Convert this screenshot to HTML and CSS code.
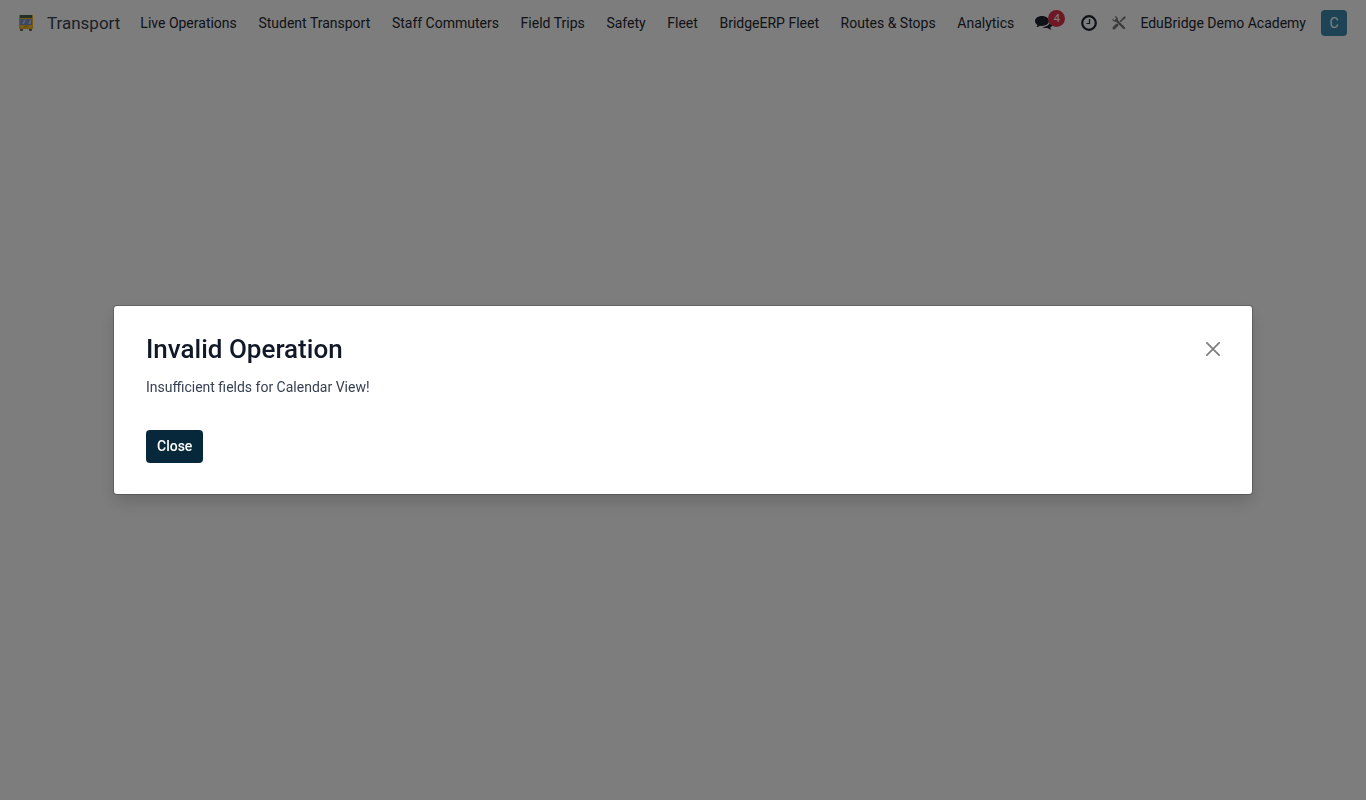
FILE: index.html
```html
<!DOCTYPE html>
<html lang="en">
<head>
<meta charset="utf-8">
<meta name="viewport" content="width=device-width, initial-scale=1">
<title>Transport</title>
<link rel="stylesheet" href="styles.css">
</head>
<body>
<header class="navbar">
  <a class="app-icon" href="#" aria-label="Home menu">
    <svg width="16" height="18" viewBox="0 0 16 18" aria-hidden="true">
      <rect x="2" y="14" width="3" height="3" rx="1" fill="#66604a"/>
      <rect x="11" y="14" width="3" height="3" rx="1" fill="#66604a"/>
      <rect x="1" y="1" width="14" height="14" rx="1" fill="#e8b020"/>
      <rect x="2" y="1" width="12" height="3" fill="#44604c"/>
      <rect x="2" y="5" width="12" height="6" fill="#7c8fc4"/>
      <path d="M4 10l2-4h2l-2 4zM10 10l2-4h1v3l-1 1z" fill="#b4c2e6"/>
      <path d="M3 12h2v1H3zM11 12h2v1h-2z" fill="#f5d878"/>
      <path d="M6 12h4v1H6z" fill="#c9951a"/>
    </svg>
  </a>
  <a class="brand" href="#">Transport</a>
  <nav class="menu">
    <a href="#">Live Operations</a>
    <a href="#">Student Transport</a>
    <a href="#">Staff Commuters</a>
    <a href="#">Field Trips</a>
    <a href="#">Safety</a>
    <a href="#">Fleet</a>
    <a href="#">BridgeERP Fleet</a>
    <a href="#">Routes &amp; Stops</a>
    <a href="#">Analytics</a>
  </nav>
  <div class="systray">
    <button class="tray-button messages" type="button" aria-label="Messages">
      <svg width="18" height="16" viewBox="0 0 18 16" fill="currentColor" aria-hidden="true">
        <path d="M7 1C3 1 0 3.200 0 6c0 1.600 1 3 2.600 3.900-.3.900-.9 1.600-1.500 2.200 1.600-.1 2.900-.7 3.900-1.400.6.200 1.300.2 2 .2 3.900 0 7-2.200 7-4.900S10.900 1 7 1z"/>
        <path d="M15.300 5.300c.3 3.700-3.400 6.600-8 6.700 1.200.9 3.100 1.300 5 1 1.100.9 2.500 1.500 4.400 1.700-.7-.7-1.200-1.300-1.500-2.200C18.600 10.800 18.800 7.100 15.300 5.300z"/>
      </svg>
      <span class="badge">4</span>
    </button>
    <button class="tray-button" type="button" aria-label="Activities">
      <svg width="16" height="16" viewBox="0 0 16 16" fill="none" stroke="currentColor" aria-hidden="true">
        <circle cx="8" cy="8" r="6.800" stroke-width="2.200"/>
        <path d="M8.500 4v4.500H5.500" stroke-width="1.200"/>
      </svg>
    </button>
    <button class="tray-button tools" type="button" aria-label="Developer tools">
      <svg width="14" height="14" viewBox="0 0 14 14" fill="none" stroke="currentColor" aria-hidden="true">
        <path d="M4 4l8 8" stroke-width="2.400" stroke-linecap="round"/>
        <path d="M.3 2.500l2 1.700 1.700-.3.200-1.700L2.600.4C5 .1 6.500 2 5.800 4.300L4.500 5.700C2.500 6.200.1 5 .3 2.500z" fill="currentColor" stroke="none"/>
        <path d="M12.600 1.400L8.200 5.800" stroke-width="1.600"/>
        <path d="M13 .3l.8.800-1.600 2.400-1.700-1.700z" fill="currentColor" stroke="none"/>
        <path d="M5 9l-3 3" stroke-width="3" stroke-linecap="round"/>
      </svg>
    </button>
    <span class="company">EduBridge Demo Academy</span>
    <button class="avatar" type="button" aria-label="User menu">C</button>
  </div>
</header>
<div class="backdrop">
  <section class="dialog" role="dialog" aria-modal="true" aria-labelledby="dialog-title">
    <div class="dialog-header">
      <h1 id="dialog-title">Invalid Operation</h1>
      <button class="dismiss" type="button" aria-label="Dismiss">
        <svg width="14" height="14" viewBox="0 0 14 14" fill="none" stroke="currentColor" stroke-width="1.800" stroke-linecap="round" aria-hidden="true">
          <path d="M.9.9l12.200 12.200M13.100.9L.9 13.100"/>
        </svg>
      </button>
    </div>
    <p>Insufficient fields for Calendar View!</p>
    <button class="primary" type="button">Close</button>
  </section>
</div>
</body>
</html>
```
FILE: styles.css
```css
* {
  box-sizing: border-box;
}

body {
  margin: 0;
  min-height: 100vh;
  background: #fafafa;
  color: #374151;
  font-family: Roboto, "Noto Sans", sans-serif;
  font-size: 14px;
  line-height: 21px;
}

a {
  color: inherit;
  text-decoration: none;
}

button {
  font: inherit;
  border: 0;
  padding: 0;
  cursor: pointer;
}

svg {
  display: block;
}

.navbar {
  display: flex;
  align-items: center;
  height: 46px;
  padding: 0 19px 0 18px;
  color: #22262e;
  white-space: nowrap;
}

.brand {
  margin-left: 13px;
  font-size: 17px;
  color: #374151;
}

.menu {
  display: flex;
  flex: 1;
  justify-content: space-between;
  max-width: 874px;
  margin-left: 20px;
}

.systray {
  display: flex;
  align-items: center;
  margin-left: auto;
  padding-left: 21px;
}

.tray-button {
  margin-right: 15px;
  background: none;
  color: #1c2430;
}

.messages {
  position: relative;
  margin-right: 28px;
}

.badge {
  position: absolute;
  top: -5px;
  left: 13px;
  width: 17px;
  height: 17px;
  border-radius: 50%;
  background: #d9304a;
  color: #fff;
  font-size: 11px;
  line-height: 17px;
  text-align: center;
}

.tools {
  margin-right: 14px;
  color: #777;
}

.avatar {
  width: 26px;
  height: 26px;
  margin-left: 15px;
  border-radius: 4px;
  background: #3c87ab;
  color: #fff;
}

.backdrop {
  position: fixed;
  inset: 0;
  display: flex;
  align-items: center;
  justify-content: center;
  padding: 0 114px;
  background: rgba(0, 0, 0, 0.5);
}

.dialog {
  width: 100%;
  max-width: 1138px;
  padding: 24px 32px 31px;
  border-radius: 3px;
  background: #fff;
  box-shadow: 0 0 0 1px rgba(0, 0, 0, 0.2), 0 8px 16px rgba(0, 0, 0, 0.15);
}

.dialog-header {
  display: flex;
  align-items: center;
  justify-content: space-between;
}

.dialog h1 {
  margin: 0;
  color: #111827;
  font-size: 26px;
  font-weight: 500;
  line-height: 38px;
}

.dismiss {
  background: none;
  color: #7f7f7f;
}

.dialog p {
  margin: 9px 0 32px;
}

.primary {
  height: 33px;
  padding: 0 11px;
  border-radius: 4px;
  background: #06283a;
  color: #fff;
  font-weight: 500;
}
```
